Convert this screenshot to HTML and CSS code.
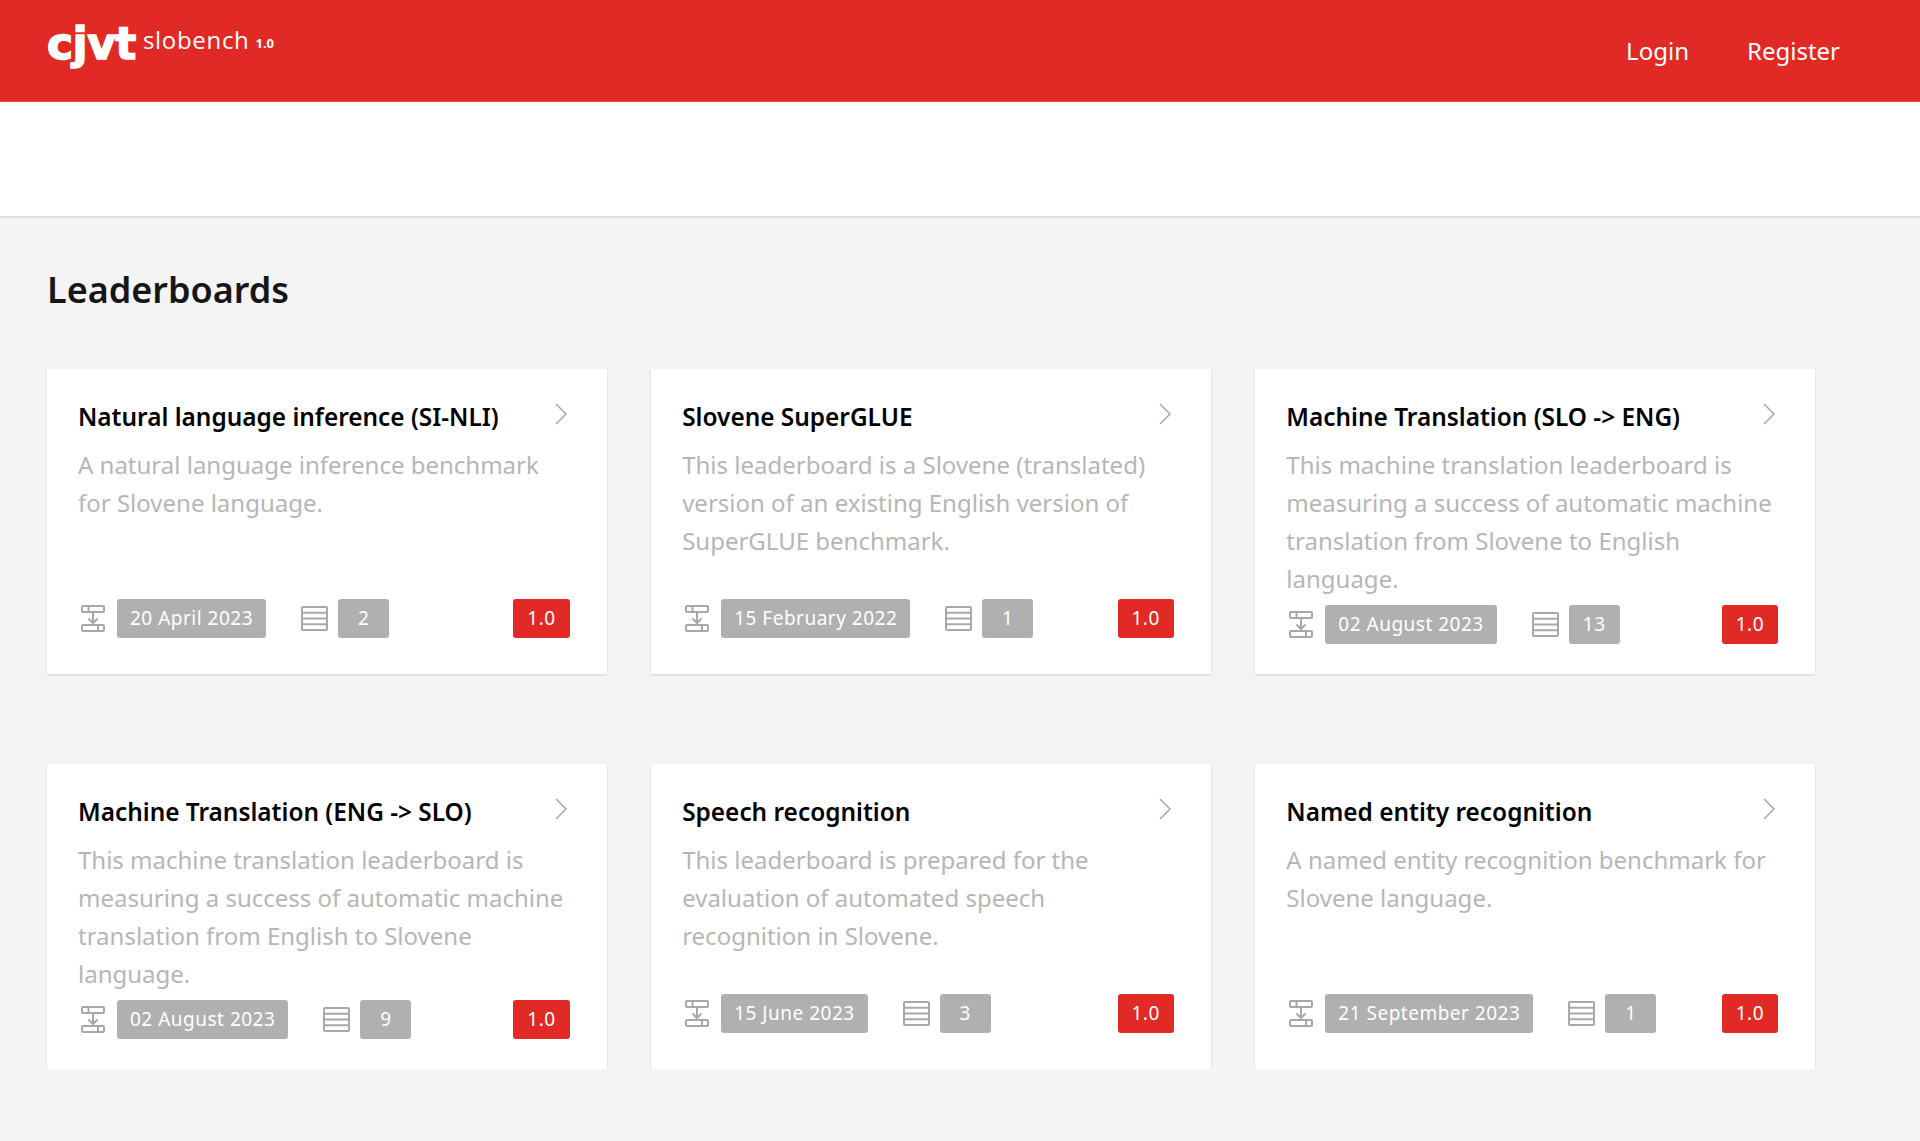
FILE: index.html
```html
<!DOCTYPE html>
<html lang="en">
<head>
  <meta charset="UTF-8" />
  <meta name="viewport" content="width=device-width, initial-scale=1.0" />
  <title>SloBench</title>
  <link rel="stylesheet" href="styles.css">
</head>
<body>
  <svg class="icon-defs" width="0" height="0">
    <symbol id="icon-date" viewBox="0 0 24 27">
      <rect x="1" y="1" width="22" height="6" rx="1" />
      <path d="M7.500 1v6" />
      <path d="M12 7v11M7.500 13.500l4.500 4.500 4.500-4.500" />
      <rect x="1" y="20" width="22" height="6" rx="1" />
      <path d="M17 20v6" />
    </symbol>
    <symbol id="icon-table" viewBox="0 0 27 25">
      <rect x="1" y="1" width="25" height="23" rx="1" />
      <path d="M1 6.750h25M1 12.500h25M1 18.250h25" />
    </symbol>
    <symbol id="icon-chevron" viewBox="0 0 14 22">
      <path d="M2 1l10 10L2 21" />
    </symbol>
  </svg>

  <header class="topbar">
    <a class="brand" href="#">
      <span class="brand-mark">cjvt</span>
      <span class="brand-name">slobench</span>
      <span class="brand-version">1.0</span>
    </a>
    <nav class="topnav">
      <a href="#">Login</a>
      <a href="#">Register</a>
    </nav>
  </header>
  <div class="subbar"></div>

  <main>
    <h1>Leaderboards</h1>
    <div class="board-grid">

      <article class="board-card">
        <div class="card-head">
          <h3>Natural language inference (SI-NLI)</h3>
          <svg class="chevron"><use href="#icon-chevron" /></svg>
        </div>
        <p class="desc">A natural language inference benchmark for Slovene language.</p>
        <div class="card-foot">
          <svg class="icon"><use href="#icon-date" /></svg>
          <span class="pill">20 April 2023</span>
          <svg class="icon icon-table"><use href="#icon-table" /></svg>
          <span class="pill">2</span>
          <span class="pill version">1.0</span>
        </div>
      </article>

      <article class="board-card">
        <div class="card-head">
          <h3>Slovene SuperGLUE</h3>
          <svg class="chevron"><use href="#icon-chevron" /></svg>
        </div>
        <p class="desc">This leaderboard is a Slovene (translated) version of an existing English version of SuperGLUE benchmark.</p>
        <div class="card-foot">
          <svg class="icon"><use href="#icon-date" /></svg>
          <span class="pill">15 February 2022</span>
          <svg class="icon icon-table"><use href="#icon-table" /></svg>
          <span class="pill">1</span>
          <span class="pill version">1.0</span>
        </div>
      </article>

      <article class="board-card">
        <div class="card-head">
          <h3>Machine Translation (SLO -&gt; ENG)</h3>
          <svg class="chevron"><use href="#icon-chevron" /></svg>
        </div>
        <p class="desc">This machine translation leaderboard is measuring a success of automatic machine translation from Slovene to English language.</p>
        <div class="card-foot">
          <svg class="icon"><use href="#icon-date" /></svg>
          <span class="pill">02 August 2023</span>
          <svg class="icon icon-table"><use href="#icon-table" /></svg>
          <span class="pill">13</span>
          <span class="pill version">1.0</span>
        </div>
      </article>

      <article class="board-card">
        <div class="card-head">
          <h3>Machine Translation (ENG -&gt; SLO)</h3>
          <svg class="chevron"><use href="#icon-chevron" /></svg>
        </div>
        <p class="desc">This machine translation leaderboard is measuring a success of automatic machine translation from English to Slovene language.</p>
        <div class="card-foot">
          <svg class="icon"><use href="#icon-date" /></svg>
          <span class="pill">02 August 2023</span>
          <svg class="icon icon-table"><use href="#icon-table" /></svg>
          <span class="pill">9</span>
          <span class="pill version">1.0</span>
        </div>
      </article>

      <article class="board-card">
        <div class="card-head">
          <h3>Speech recognition</h3>
          <svg class="chevron"><use href="#icon-chevron" /></svg>
        </div>
        <p class="desc">This leaderboard is prepared for the evaluation of automated speech recognition in Slovene.</p>
        <div class="card-foot">
          <svg class="icon"><use href="#icon-date" /></svg>
          <span class="pill">15 June 2023</span>
          <svg class="icon icon-table"><use href="#icon-table" /></svg>
          <span class="pill">3</span>
          <span class="pill version">1.0</span>
        </div>
      </article>

      <article class="board-card">
        <div class="card-head">
          <h3>Named entity recognition</h3>
          <svg class="chevron"><use href="#icon-chevron" /></svg>
        </div>
        <p class="desc">A named entity recognition benchmark for Slovene language.</p>
        <div class="card-foot">
          <svg class="icon"><use href="#icon-date" /></svg>
          <span class="pill">21 September 2023</span>
          <svg class="icon icon-table"><use href="#icon-table" /></svg>
          <span class="pill">1</span>
          <span class="pill version">1.0</span>
        </div>
      </article>

    </div>
  </main>
</body>
</html>
```

FILE: styles.css
```css
body {
  font-family: 'Noto Sans', 'Open Sans', sans-serif;
  background-color: #f4f4f4;
  margin: 0;
  color: #161616;
}
a {
  color: inherit;
  text-decoration: none;
}
.icon-defs {
  position: absolute;
}
.topbar {
  display: flex;
  justify-content: space-between;
  height: 101px;
  padding: 0 80px 0 47px;
  background-color: #e12a26;
  border-bottom: 1px solid #ee4b47;
  color: white;
}
.brand {
  display: flex;
  align-items: flex-start;
  padding-top: 16px;
}
.brand-mark {
  font-family: 'DejaVu Sans', sans-serif;
  font-weight: bold;
  font-size: 44px;
  line-height: 56px;
  letter-spacing: -0.5px;
  -webkit-text-stroke: 1.5px white;
}
.brand-name {
  margin-left: 7px;
  font-family: 'Open Sans', sans-serif;
  font-weight: 400;
  font-size: 24px;
  line-height: 48px;
  letter-spacing: 0.7px;
}
.brand-version {
  margin-left: 6px;
  font-weight: bold;
  font-size: 13px;
  line-height: 54px;
}
.topnav {
  display: flex;
  gap: 58px;
  padding-top: 34px;
  font-size: 24px;
  line-height: 34px;
}
.subbar {
  height: 114px;
  background: white;
  border-bottom: 2px solid #e0e0e0;
}
main {
  padding: 0 105px 0 47px;
}
h1 {
  margin: 0;
  padding-top: 49px;
  height: 102px;
  font-size: 36px;
  line-height: 46px;
  font-weight: 600;
}
.board-grid {
  display: grid;
  grid-template-columns: repeat(3, 1fr);
  column-gap: 44.5px;
  row-gap: 90px;
}
.board-card {
  box-sizing: border-box;
  height: 305px;
  padding: 31px 37px 0 31px;
  background: white;
  box-shadow: 0 1px 2px rgba(0,0,0,0.15);
}
.card-head {
  display: flex;
  justify-content: space-between;
  height: 34px;
}
.card-head h3 {
  margin: 0;
  font-size: 24.4px;
  line-height: 34px;
  font-weight: 600;
  color: #000;
}
.chevron {
  width: 14px;
  height: 22px;
  margin: 3px 2px 0 0;
  fill: none;
  stroke: #a8a8a8;
  stroke-width: 1.5;
}
.desc {
  margin: 12px 0 0;
  min-height: 146px;
  font-size: 24px;
  line-height: 38px;
  color: #b6b6b6;
}
.card-foot {
  display: flex;
  align-items: center;
  margin-top: 7px;
  padding-left: 3px;
}
.icon {
  width: 24px;
  height: 27px;
  margin-right: 12px;
  fill: none;
  stroke: #a8a8a8;
  stroke-width: 2;
}
.icon-table {
  width: 27px;
  height: 25px;
  margin: 0 10px 0 35px;
}
.pill {
  min-width: 25px;
  padding: 0 13px;
  height: 39px;
  line-height: 39px;
  text-align: center;
  border-radius: 3px;
  background-color: #b0b0b0;
  color: white;
  font-size: 19px;
  letter-spacing: 0.5px;
}
.version {
  margin-left: auto;
  padding: 0 14px;
  background-color: #e12a26;
}
```
